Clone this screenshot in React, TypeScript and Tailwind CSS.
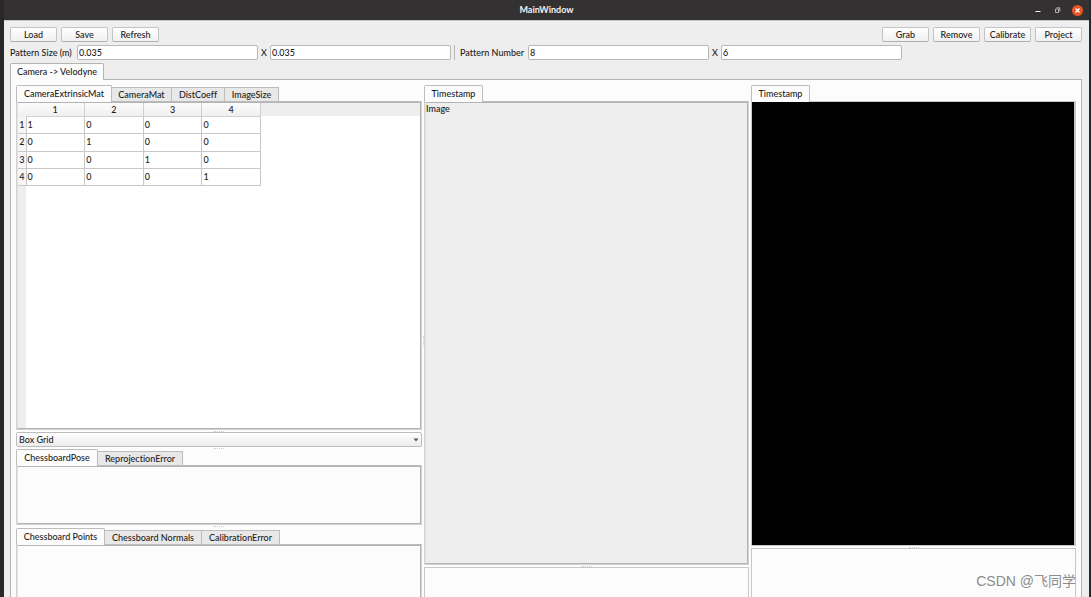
import { useState } from 'react';
import type { ReactNode } from 'react';
import clsx from 'clsx';

interface TabItem {
  label: string;
  width: string;
}

const matrixTabs: TabItem[] = [
  { label: 'CameraExtrinsicMat', width: 'w-[96px]' },
  { label: 'CameraMat', width: 'w-[60px]' },
  { label: 'DistCoeff', width: 'w-[53px]' },
  { label: 'ImageSize', width: 'w-[54px]' },
];

const poseTabs: TabItem[] = [
  { label: 'ChessboardPose', width: 'w-[82px]' },
  { label: 'ReprojectionError', width: 'w-[85px]' },
];

const pointTabs: TabItem[] = [
  { label: 'Chessboard Points', width: 'w-[89px]' },
  { label: 'Chessboard Normals', width: 'w-[97px]' },
  { label: 'CalibrationError', width: 'w-[78px]' },
];

const timestampTabs: TabItem[] = [{ label: 'Timestamp', width: 'w-[59px]' }];

const extrinsicMat = [
  [1, 0, 0, 0],
  [0, 1, 0, 0],
  [0, 0, 1, 0],
  [0, 0, 0, 1],
];

function ToolButton({ children }: { children: ReactNode }) {
  return (
    <button
      type="button"
      className="flex h-[15px] w-[47px] items-center justify-center rounded-xs border border-[#c4c4c4] border-b-[#b0b0b0] bg-linear-to-b from-white to-[#f0f0f0]"
    >
      {children}
    </button>
  );
}

function Field({ id, label, value }: { id: string; label: string; value: string }) {
  return (
    <input
      id={id}
      aria-label={label}
      defaultValue={value}
      className="h-[15px] w-[181px] rounded-xs border border-[#b8b8b8] bg-white px-px outline-none"
    />
  );
}

function TabBar({ tabs }: { tabs: TabItem[] }) {
  const [active, setActive] = useState(0);

  return (
    <div role="tablist" className="flex h-4 shrink-0 items-end">
      {tabs.map((tab, i) => (
        <button
          key={tab.label}
          type="button"
          role="tab"
          aria-selected={i === active}
          onClick={() => setActive(i)}
          className={clsx(
            'flex items-center justify-center whitespace-nowrap border border-b-0 border-[#bdbdbd]',
            tab.width,
            i === active ? 'z-10 -mb-px h-[17px] rounded-t-xs bg-[#fcfcfc]' : 'h-[14px] border-l-0 bg-[#e8e8e8]',
          )}
        >
          {tab.label}
        </button>
      ))}
    </div>
  );
}

function Panel({ className, children }: { className?: string; children?: ReactNode }) {
  return (
    <div className={clsx('flex border border-[#d2d2d2] border-t-[#bbbbbb]', className)}>
      <div className="flex-1 overflow-hidden border border-[#b4b4b4] border-l-[#e2e2e2]">{children}</div>
    </div>
  );
}

function Grip({ vertical = false }: { vertical?: boolean }) {
  return (
    <div className={clsx('flex shrink-0 items-center justify-center', vertical ? 'w-[2px]' : 'h-[2px]')}>
      <div
        className={clsx(
          'border-dotted border-[#d0d0d0]',
          vertical ? 'h-[10px] border-l' : 'w-[10px] border-t',
        )}
      />
    </div>
  );
}

function MatrixTable() {
  return (
    <table className="h-[83px] w-[243px] table-fixed border-collapse">
      <colgroup>
        <col className="w-2" />
        <col />
        <col />
        <col />
        <col />
      </colgroup>
      <thead>
        <tr className="h-[13px] bg-linear-to-b from-[#fcfcfc] to-[#efefef]">
          <td />
          {[1, 2, 3, 4].map((n) => (
            <th key={n} scope="col" className="border-r border-b border-[#d0d0d0] p-0 pt-px font-medium">
              {n}
            </th>
          ))}
        </tr>
      </thead>
      <tbody>
        {extrinsicMat.map((row, r) => (
          <tr key={r}>
            <th scope="row" className="border-r border-b border-[#c8c8c8] bg-[#f6f6f6] p-0 font-medium">
              {r + 1}
            </th>
            {row.map((value, c) => (
              <td key={c} className="border-r border-b border-[#c8c8c8] bg-white p-0 pl-px">
                {value}
              </td>
            ))}
          </tr>
        ))}
      </tbody>
    </table>
  );
}

function TitleBar() {
  return (
    <header className="flex h-5 shrink-0 items-center bg-[#333132] px-[6px] text-[#f2f2f2]">
      <div className="flex-1" />
      <h1 className="font-bold">MainWindow</h1>
      <div className="flex flex-1 items-center justify-end gap-2">
        <button type="button" aria-label="Minimize" className="flex size-3 items-center justify-center">
          <svg viewBox="0 0 12 12" className="size-3">
            <path d="M3.5 7.5h5" stroke="currentColor" />
          </svg>
        </button>
        <button type="button" aria-label="Restore" className="flex size-3 items-center justify-center">
          <svg viewBox="0 0 12 12" className="size-3" fill="none" stroke="#cfcfcf" strokeWidth="0.8">
            <path d="M3.5 5h3v3.5h-3zM4.5 3.8h3.3v3.7" />
          </svg>
        </button>
        <button
          type="button"
          aria-label="Close"
          className="flex size-[11px] items-center justify-center rounded-full bg-[#e95420]"
        >
          <svg viewBox="0 0 11 11" className="size-[11px]">
            <path d="M3.5 3.5l4 4M7.5 3.5l-4 4" stroke="#ffffff" strokeWidth="1.2" />
          </svg>
        </button>
      </div>
    </header>
  );
}

export default function App() {
  return (
    <div className="relative flex h-screen flex-col overflow-hidden border-r-2 border-l-4 border-[#29272a] bg-[#eeeeee] font-['Lato','Noto_Sans',sans-serif] text-[9px] leading-[12px] font-medium text-[#1c1c1c] [font-variant-ligatures:none]">
      <TitleBar />

      <main className="flex min-h-0 flex-1 flex-col border-t border-[#c8c8c8] pt-[6px] pr-[7px] pl-[6px]">
        {/* Toolbar */}
        <div className="flex justify-between">
          <div className="flex gap-1">
            <ToolButton>Load</ToolButton>
            <ToolButton>Save</ToolButton>
            <ToolButton>Refresh</ToolButton>
          </div>
          <div className="flex gap-1">
            <ToolButton>Grab</ToolButton>
            <ToolButton>Remove</ToolButton>
            <ToolButton>Calibrate</ToolButton>
            <ToolButton>Project</ToolButton>
          </div>
        </div>

        {/* Pattern settings */}
        <div className="mt-[3px] flex items-center whitespace-nowrap">
          <label htmlFor="size-w" className="w-[67px]">
            Pattern Size (m)
          </label>
          <Field id="size-w" label="Pattern width" value="0.035" />
          <span className="w-3 text-center">X</span>
          <Field id="size-h" label="Pattern height" value="0.035" />
          <div className="ml-[3px] h-[15px] w-[6px] border-l border-[#b8b8b8]" />
          <label htmlFor="number-x" className="w-[68px]">
            Pattern Number
          </label>
          <Field id="number-x" label="Pattern columns" value="8" />
          <span className="w-3 text-center">X</span>
          <Field id="number-y" label="Pattern rows" value="6" />
        </div>

        <div role="tablist" className="mt-[3px] flex h-4">
          <button
            type="button"
            role="tab"
            aria-selected="true"
            className="z-10 -mb-px flex w-[94px] items-center justify-center rounded-t-xs border border-b-0 border-[#b4b4b4] bg-[#fcfcfc]"
          >
            Camera -&gt; Velodyne
          </button>
        </div>

        <div className="flex min-h-0 flex-1 border border-b-0 border-[#b4b4b4] bg-[#fcfcfc] px-[5px] pt-[5px]">
          {/* Calibration data */}
          <section className="flex min-w-0 flex-[406] flex-col">
            <TabBar tabs={matrixTabs} />
            <Panel className="min-h-0 flex-1 bg-white">
              <div className="h-full bg-linear-to-r from-[#eeeeee] from-[8px] to-white to-[8px]">
                <div className="bg-linear-to-b from-[#eeeeee] from-[13px] to-transparent to-[13px]">
                  <MatrixTable />
                </div>
              </div>
            </Panel>
            <Grip />
            <div className="relative h-[15px] shrink-0">
              <select
                aria-label="Display grid"
                className="block h-[15px] w-full appearance-none rounded-xs border border-[#bdbdbd] bg-linear-to-b from-white to-[#ececec] px-[2px] outline-none"
              >
                <option>Box Grid</option>
              </select>
              <svg viewBox="0 0 6 4" className="pointer-events-none absolute top-[6px] right-[3px] h-1 w-[6px]">
                <path d="M0.5 0.5h5L3 3.5z" fill="#555555" />
              </svg>
            </div>
            <Grip />
            <TabBar tabs={poseTabs} />
            <Panel className="h-[60px] shrink-0" />
            <div className="h-[3px] shrink-0">
              <Grip />
            </div>
            <TabBar tabs={pointTabs} />
            <div className="h-[53px] shrink-0 overflow-hidden">
              <Panel className="h-[60px]" />
            </div>
          </section>

          <Grip vertical />

          {/* Camera image */}
          <section className="flex min-w-0 flex-[325] flex-col">
            <TabBar tabs={timestampTabs} />
            <Panel className="min-h-0 flex-1 bg-[#eeeeee]">Image</Panel>
            <Grip />
            <div className="h-[30px] shrink-0 border border-b-0 border-[#c8c8c8]" />
          </section>

          <div className="w-[2px] shrink-0" />

          {/* Point cloud */}
          <section className="flex min-w-0 flex-[325] flex-col">
            <TabBar tabs={timestampTabs} />
            <div className="min-h-0 flex-1 border border-r-2 border-[#c8c8c8] bg-black" />
            <Grip />
            <div className="h-[49px] shrink-0 border border-b-0 border-[#c8c8c8]" />
          </section>
        </div>
      </main>

      <p className="absolute right-[13px] bottom-[6px] font-['Liberation_Sans','Noto_Sans_CJK_SC',sans-serif] text-sm font-normal text-[#8c8c8c]">
        CSDN @飞同学
      </p>
    </div>
  );
}
